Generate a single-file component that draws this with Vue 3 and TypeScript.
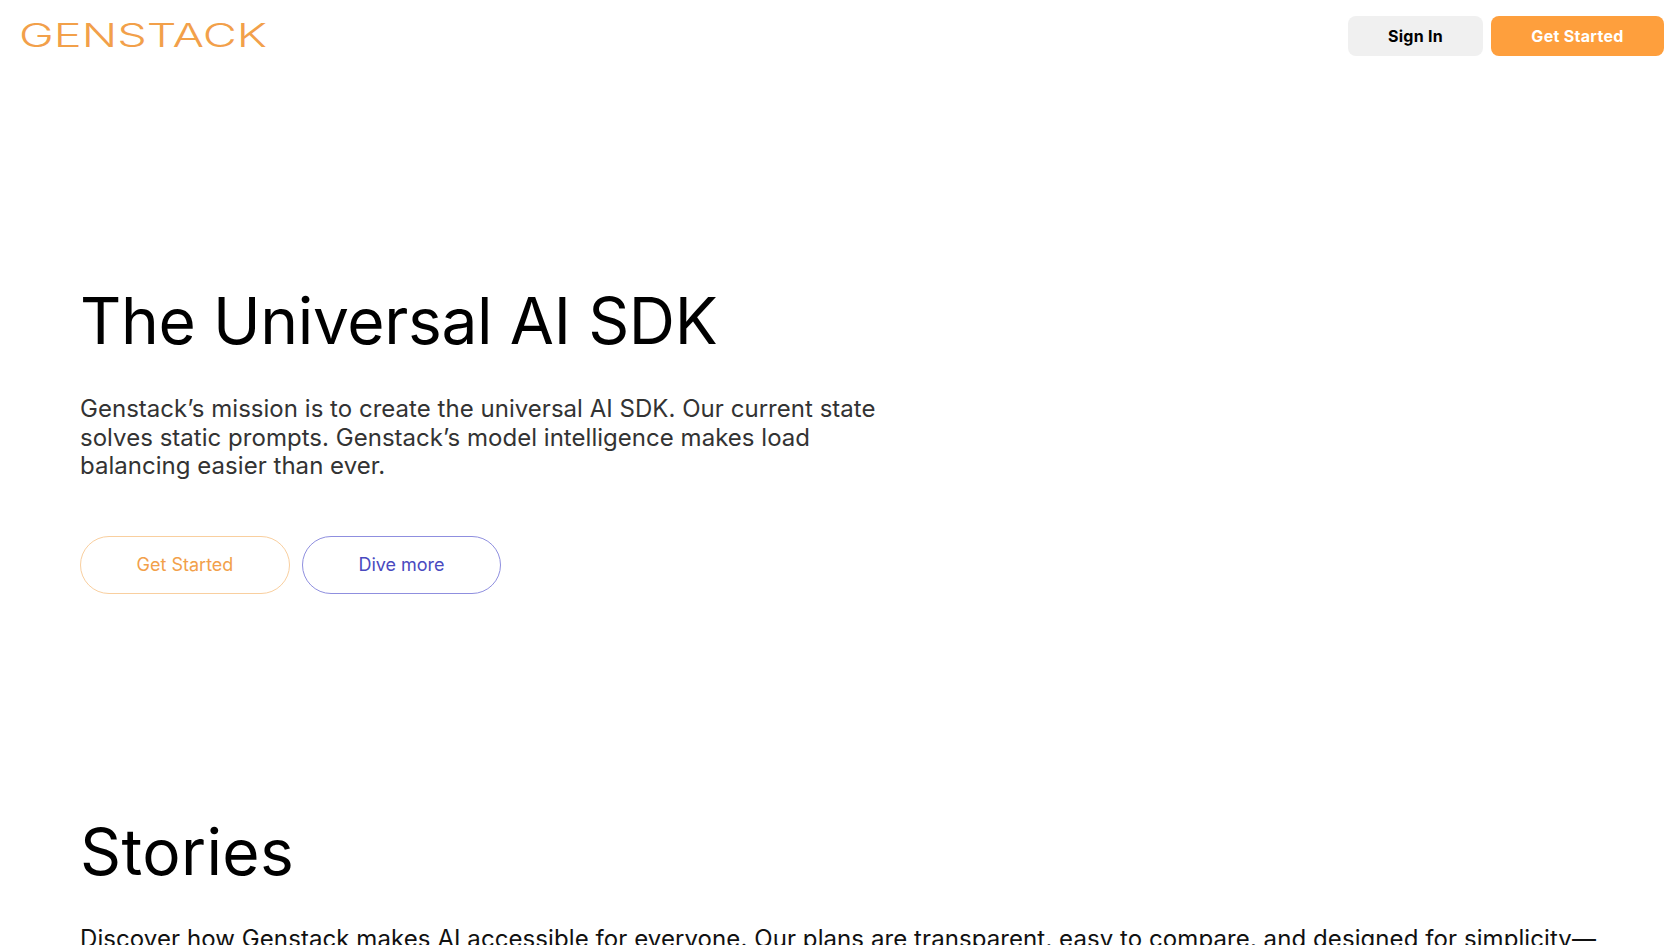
<script setup lang="ts">
const heroText = 'Genstack’s mission is to create the universal AI SDK. Our current state solves static prompts. Genstack’s model intelligence makes load balancing easier than ever.'
const storiesText = 'Discover how Genstack makes AI accessible for everyone. Our plans are transparent, easy to compare, and designed for simplicity—'
</script>

<template>
  <div class="page">
    <header class="nav">
      <svg class="logo" width="250" height="30" viewBox="0 0 250 30" role="img" aria-label="Genstack">
        <text x="-1" y="27" textLength="248" lengthAdjust="spacingAndGlyphs">GENSTACK</text>
      </svg>
      <div class="nav-actions">
        <button class="nav-btn sign-in">Sign In</button>
        <button class="nav-btn get-started">Get Started</button>
      </div>
    </header>

    <section class="hero">
      <h1>The Universal AI SDK</h1>
      <p class="lead">{{ heroText }}</p>
      <div class="cta">
        <button class="pill pill-orange">Get Started</button>
        <button class="pill pill-blue">Dive more</button>
      </div>
    </section>

    <section class="stories">
      <h2>Stories</h2>
      <p class="lead wide">{{ storiesText }}</p>
    </section>
  </div>
</template>

<style scoped>
.page {
  height: 945px;
  overflow: hidden;
  background: #fff;
  font-family: "Inter", "Open Sans", sans-serif;
  color: #000;
}

.nav {
  display: flex;
  justify-content: space-between;
  align-items: center;
  padding: 16px 16px 0 20px;
}

.logo {
  display: block;
  margin-top: -2px;
  overflow: visible;
}

.logo text {
  font-family: "Inter", sans-serif;
  font-size: 32px;
  font-weight: 300;
  fill: #f2a04a;
}

.nav-actions {
  display: flex;
  gap: 8px;
}

.nav-btn {
  height: 40px;
  border: 0;
  border-radius: 8px;
  font-family: inherit;
  font-size: 16px;
  font-weight: 700;
  letter-spacing: 0.3px;
}

.sign-in {
  width: 135px;
  background: #f0f0f0;
  color: #000;
}

.get-started {
  width: 173px;
  background: #fe9f3d;
  color: #fff;
}

.hero {
  padding: 226px 80px 0;
}

h1,
h2 {
  margin: 0;
  font-weight: 400;
  font-size: 64px;
  line-height: 78px;
}

h1 {
  letter-spacing: -0.35px;
}

h2 {
  letter-spacing: 0.4px;
}

.lead {
  margin: 35px 0 0;
  width: 800px;
  font-size: 24px;
  line-height: 28.5px;
  letter-spacing: 0.03px;
  color: #333;
}

.lead.wide {
  width: 1520px;
  margin-top: 34px;
  letter-spacing: 0.08px;
  color: #111;
}

.cta {
  display: flex;
  gap: 12px;
  margin-top: 55px;
}

.pill {
  height: 58px;
  border-radius: 29px;
  background: #fff;
  font-family: inherit;
  font-size: 18px;
}

.pill-orange {
  width: 210px;
  border: 1px solid #f9cf9f;
  color: #f2a04a;
}

.pill-blue {
  width: 199px;
  border: 1px solid #8f8fdf;
  color: #4a4abf;
}

.stories {
  padding: 219px 80px 0;
}
</style>
